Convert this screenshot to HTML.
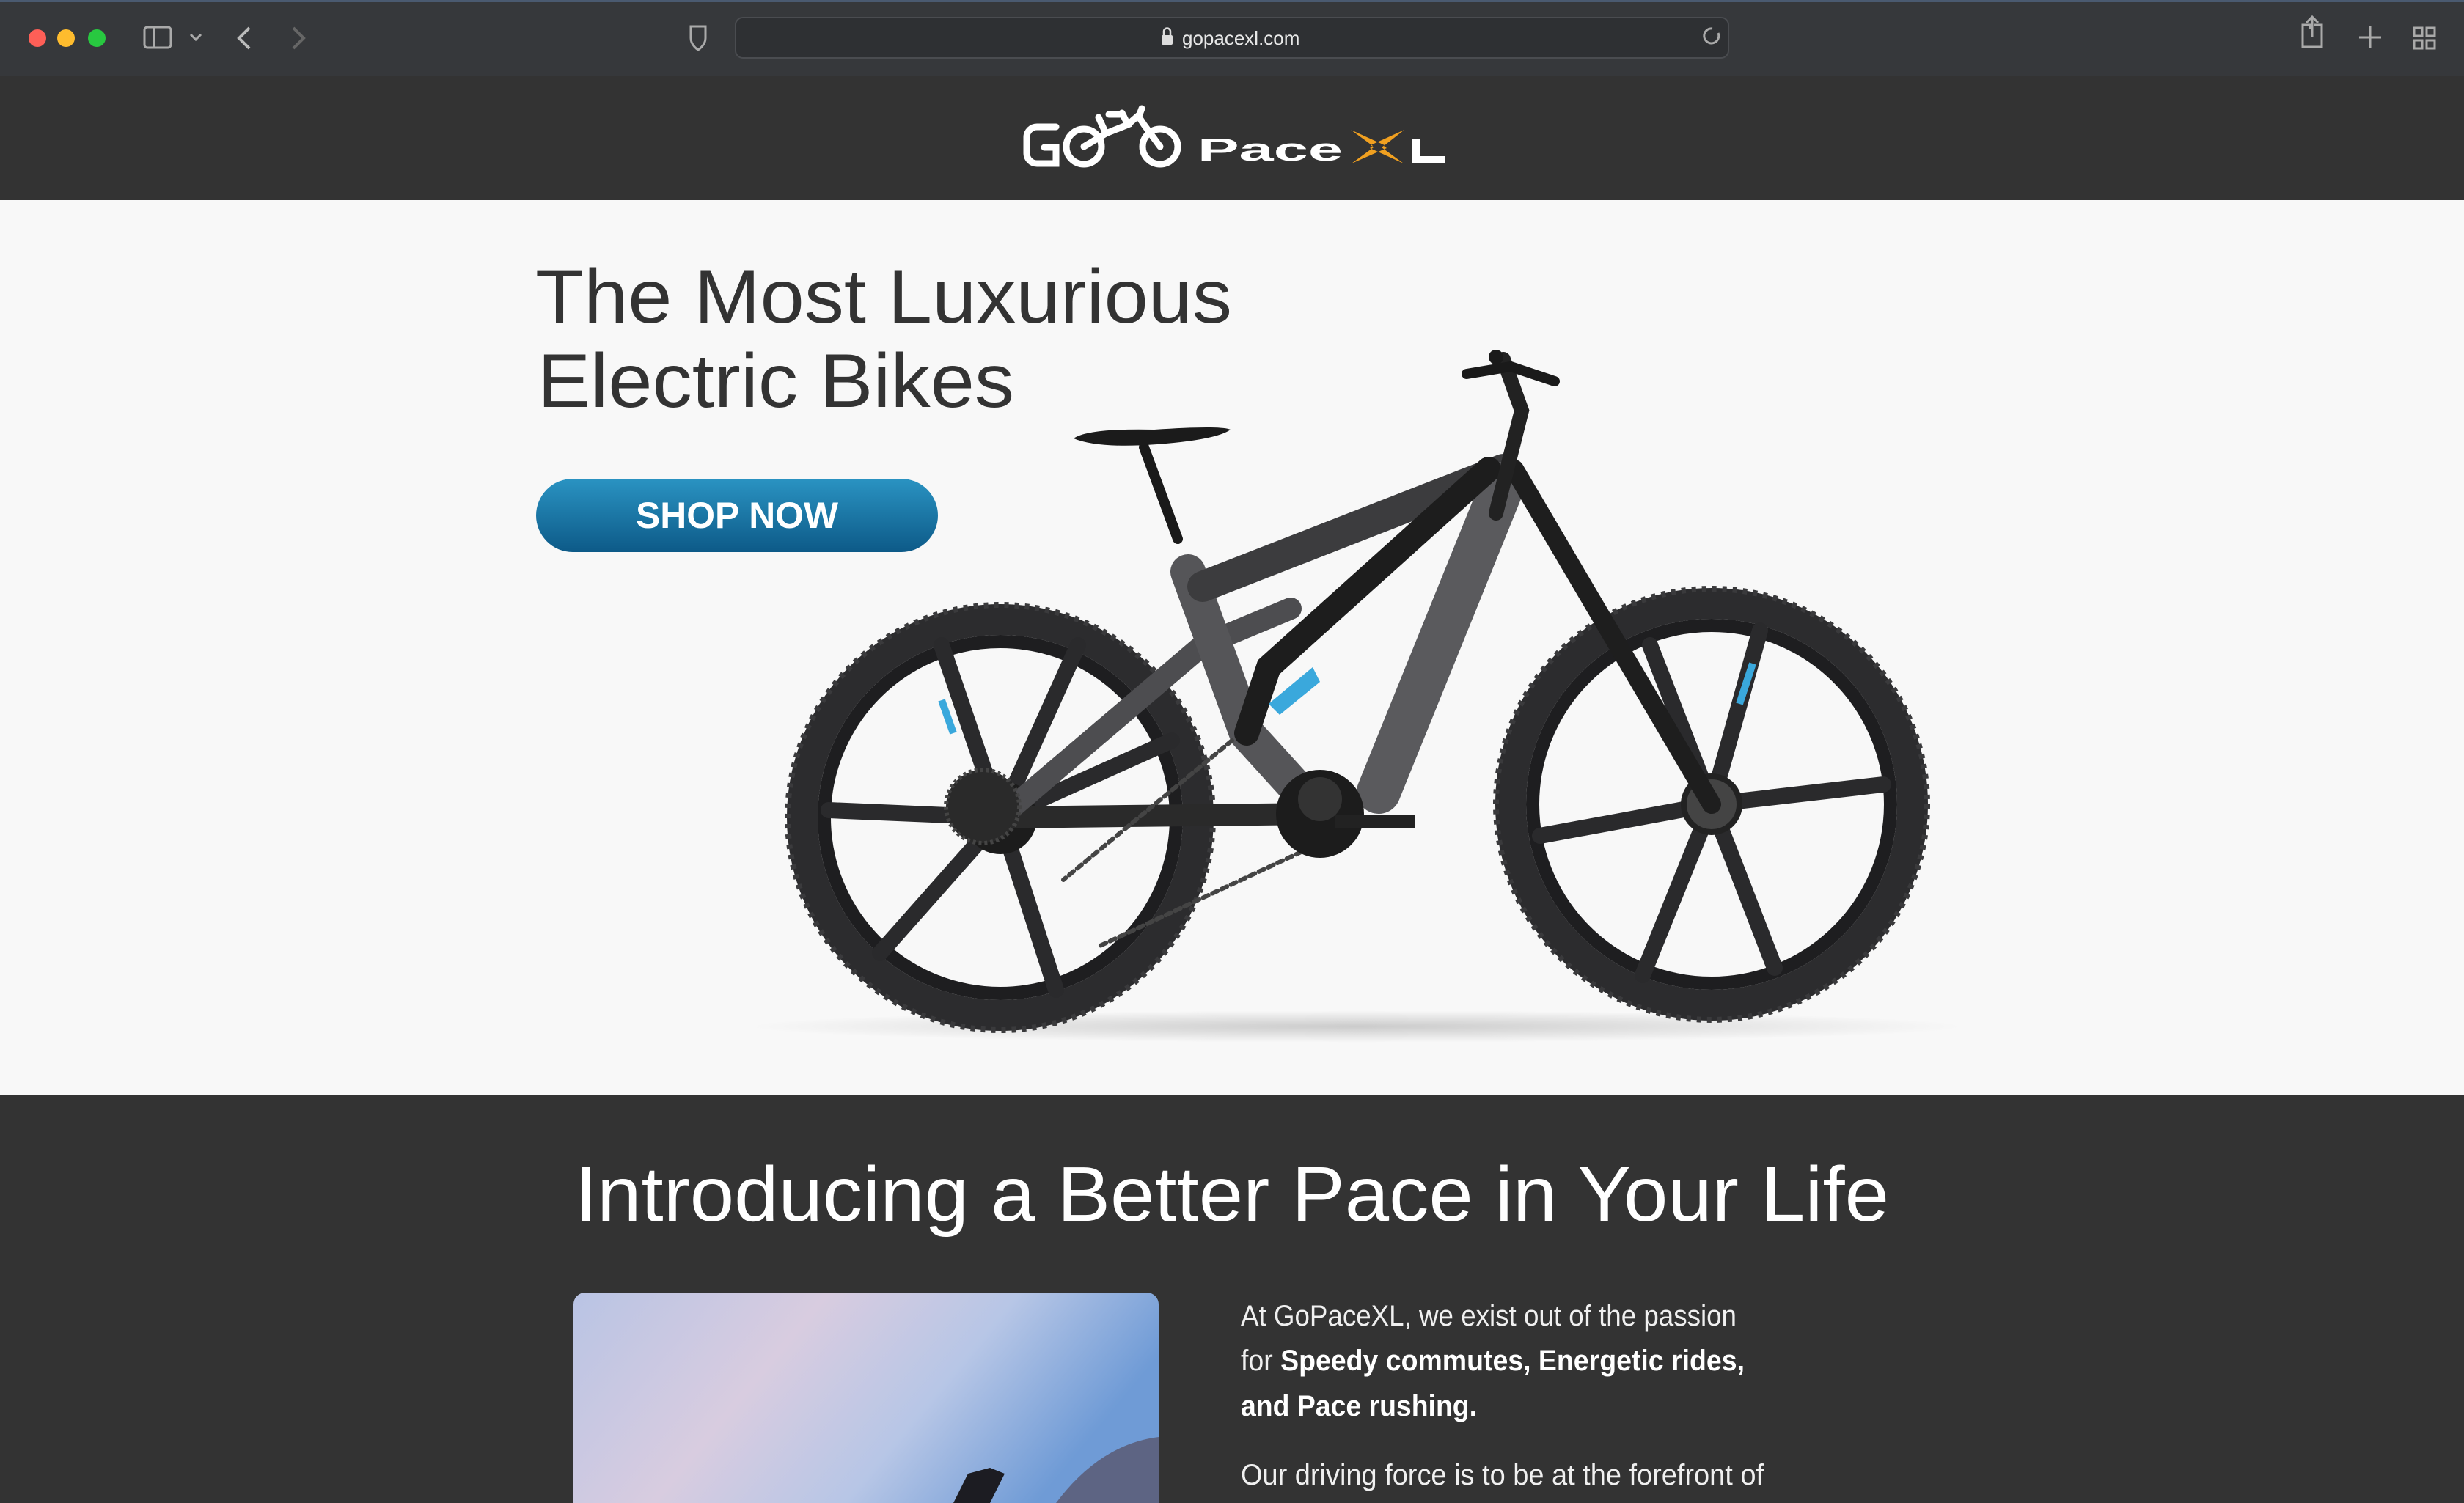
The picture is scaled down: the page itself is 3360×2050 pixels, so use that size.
<!DOCTYPE html>
<html><head><meta charset="utf-8"><style>
html,body{margin:0;padding:0;width:3360px;height:2050px;overflow:hidden;background:#333;font-family:"Liberation Sans",sans-serif}
svg{display:block}
</style></head><body>
<svg width="3360" height="2050" viewBox="0 0 3360 2050" xmlns="http://www.w3.org/2000/svg">
<defs>
<linearGradient id="btn" x1="0" y1="0" x2="0" y2="1"><stop offset="0" stop-color="#2a93c2"/><stop offset="1" stop-color="#0d5a88"/></linearGradient>
<linearGradient id="sky" x1="0" y1="0" x2="1" y2="0.3"><stop offset="0" stop-color="#b9c4e4"/><stop offset="0.4" stop-color="#d8cce0"/><stop offset="0.7" stop-color="#b7c6e6"/><stop offset="1" stop-color="#6f9bd6"/></linearGradient>
<radialGradient id="shadow" cx="0.5" cy="0.5" r="0.5"><stop offset="0" stop-color="#000" stop-opacity="0.18"/><stop offset="1" stop-color="#000" stop-opacity="0"/></radialGradient>
</defs>
<rect x="0" y="0" width="3360" height="103" fill="#36383b"/>
<rect x="0" y="0" width="3360" height="3" fill="#4a5a70"/>
<circle cx="51" cy="52" r="12" fill="#fe5f57"/><circle cx="90" cy="52" r="12" fill="#febc2e"/><circle cx="132" cy="52" r="12" fill="#28c840"/>
<rect x="197" y="37" width="36" height="28" rx="4" fill="none" stroke="#aaa" stroke-width="3"/><line x1="210" y1="37" x2="210" y2="65" stroke="#aaa" stroke-width="3"/>
<path d="M260 47 l7 7 l7-7" fill="none" stroke="#aaa" stroke-width="3"/>
<path d="M340 38 l-14 14 l14 14" fill="none" stroke="#bbb" stroke-width="4"/>
<path d="M400 38 l14 14 l-14 14" fill="none" stroke="#666" stroke-width="4"/>
<path d="M942 36 h20 v16 c0 10 -10 16 -10 16 c0 0 -10 -6 -10 -16z" fill="none" stroke="#aaa" stroke-width="3"/>
<rect x="1003" y="24" width="1354" height="55" rx="10" fill="#2e3033" stroke="#4a4c50" stroke-width="2"/>
<rect x="1584" y="48" width="15" height="13" rx="2" fill="#ddd"/><path d="M1587 48 v-5 a4.5 4.5 0 0 1 9 0 v5" fill="none" stroke="#ddd" stroke-width="2.5"/>
<text x="1612" y="61" font-size="26" fill="#e8e8e8">gopacexl.com</text>
<path d="M2343 45 a10 10 0 1 1 -8 -6" fill="none" stroke="#aaa" stroke-width="3"/>
<path d="M3150 40 v-6 h-10 v30 h26 v-30 h-10" fill="none" stroke="#aaa" stroke-width="3"/><path d="M3153 24 v26 M3145 31 l8-8 l8 8" fill="none" stroke="#aaa" stroke-width="3"/>
<path d="M3232 36 v30 M3217 51 h30" stroke="#aaa" stroke-width="3"/>
<rect x="3292" y="38" width="11" height="11" fill="none" stroke="#aaa" stroke-width="3"/><rect x="3309" y="38" width="11" height="11" fill="none" stroke="#aaa" stroke-width="3"/><rect x="3292" y="55" width="11" height="11" fill="none" stroke="#aaa" stroke-width="3"/><rect x="3309" y="55" width="11" height="11" fill="none" stroke="#aaa" stroke-width="3"/>
<rect x="0" y="103" width="3360" height="170" fill="#333"/>
<g fill="none" stroke="#fff" stroke-width="9" stroke-linecap="round">
<path d="M1440 173 h-26 a14 14 0 0 0 -14 14 v22 a14 14 0 0 0 14 14 h26 v-22 h-16"/>
<circle cx="1478" cy="200" r="24"/>
<circle cx="1582" cy="200" r="24"/>
<path d="M1478 200 l30 -18 l30 -12 l-8 -16 M1508 182 l-10 -22 M1538 170 l16 -14 l3 -8 M1552 158 l8 12 l22 30 M1512 156 h16"/>
</g>
<text x="1633" y="219" font-size="44" font-weight="bold" fill="#fff" textLength="198" lengthAdjust="spacingAndGlyphs">Pace</text>
<path d="M1842 177 l30 22 l-4 3 l46 21 l-30 -22 l4 -3z M1915 177 l-28 22 l4 3 l-48 21 l30 -22 l-4 -3z" fill="#f0a020"/>
<path d="M1931 190 v28 h40" fill="none" stroke="#fff" stroke-width="10"/>
<rect x="0" y="273" width="3360" height="1220" fill="#f8f8f8"/>
<text x="730" y="440" font-size="104" fill="#333" textLength="950" lengthAdjust="spacingAndGlyphs">The Most Luxurious</text>
<text x="733" y="555" font-size="104" fill="#333" textLength="650" lengthAdjust="spacingAndGlyphs">Electric Bikes</text>
<rect x="731" y="653" width="548" height="100" rx="50" fill="url(#btn)"/>
<text x="1005" y="720" font-size="50" font-weight="bold" fill="#fff" text-anchor="middle" textLength="276" lengthAdjust="spacingAndGlyphs">SHOP NOW</text>
<ellipse cx="1850" cy="1400" rx="830" ry="22" fill="url(#shadow)"/>
<g>
<circle cx="1364" cy="1115" r="270" fill="none" stroke="#2c2c2e" stroke-width="42"/>
<circle cx="1364" cy="1115" r="290" fill="none" stroke="#3a3a3c" stroke-width="8" stroke-dasharray="6 8"/>
<circle cx="1364" cy="1115" r="240" fill="none" stroke="#1e1e20" stroke-width="18"/>
<circle cx="2334" cy="1097" r="274" fill="none" stroke="#2c2c2e" stroke-width="42"/>
<circle cx="2334" cy="1097" r="294" fill="none" stroke="#3a3a3c" stroke-width="8" stroke-dasharray="6 8"/>
<circle cx="2334" cy="1097" r="244" fill="none" stroke="#1e1e20" stroke-width="18"/>
<g stroke="#2a2a2c" stroke-width="22" stroke-linecap="round">
<path d="M1364 1115 L1284 880 M1364 1115 L1598 1010 M1364 1115 L1440 1350 M1364 1115 L1200 1300 M1364 1115 L1130 1105 M1364 1115 L1470 880"/>
<path d="M2334 1097 L2400 860 M2334 1097 L2568 1070 M2334 1097 L2420 1320 M2334 1097 L2240 1330 M2334 1097 L2100 1140 M2334 1097 L2250 880"/>
</g>
<path d="M1284 955 L1300 1000" stroke="#3aa8dc" stroke-width="10"/>
<path d="M2390 905 L2372 960" stroke="#3aa8dc" stroke-width="10"/>
<circle cx="1364" cy="1115" r="50" fill="#1c1c1c"/>
<circle cx="2334" cy="1097" r="38" fill="#444" stroke="#222" stroke-width="8"/>
<g stroke-linecap="round" fill="none">
<path d="M1364 1115 L1800 1110" stroke="#2a2a2a" stroke-width="30"/>
<path d="M1364 1115 L1640 880 L1760 830" stroke="#4d4d50" stroke-width="30"/>
<path d="M1620 780 L1700 1000 L1800 1110" stroke="#555558" stroke-width="48"/>
<path d="M1640 800 L2050 640" stroke="#3c3c3e" stroke-width="42"/>
<path d="M2050 660 L1880 1080" stroke="#5a5a5d" stroke-width="60"/>
<path d="M2030 640 L1730 910 L1700 1000" stroke="#1d1d1d" stroke-width="34"/>
<path d="M2065 640 L2334 1097" stroke="#1e1e1e" stroke-width="26"/>
<path d="M2040 700 L2075 560 L2050 490" stroke="#222" stroke-width="20"/>
<path d="M1606 735 L1560 610" stroke="#1a1a1a" stroke-width="14"/>
<path d="M1680 1010 L1450 1200" stroke="#444" stroke-width="6" stroke-dasharray="8 6"/>
<path d="M1800 1150 L1500 1290" stroke="#444" stroke-width="6" stroke-dasharray="8 6"/>
</g>
<path d="M1464 598 q20 -14 110 -12 q90 -6 104 0 q-20 14 -100 20 q-80 6 -114 -8z" fill="#1b1b1b"/>
<path d="M1730 960 l60 -50 l10 20 l-55 45z" fill="#3aa8dc"/>
<circle cx="1800" cy="1110" r="60" fill="#1c1c1c"/>
<circle cx="1800" cy="1090" r="30" fill="#333"/>
<path d="M1820 1120 L1930 1120" stroke="#222" stroke-width="18"/>
<circle cx="1340" cy="1100" r="50" fill="#2a2a2a" stroke="#444" stroke-width="6" stroke-dasharray="4 4"/>
<path d="M2000 510 l60 -10 l60 20" stroke="#1a1a1a" stroke-width="14" fill="none" stroke-linecap="round"/>
<circle cx="2040" cy="487" r="10" fill="#1a1a1a"/>
</g>
<rect x="0" y="1493" width="3360" height="557" fill="#333"/>
<text x="1680" y="1665" font-size="106" fill="#fff" text-anchor="middle" textLength="1792" lengthAdjust="spacingAndGlyphs">Introducing a Better Pace in Your Life</text>
<path d="M782 1779 a16 16 0 0 1 16 -16 h766 a16 16 0 0 1 16 16 v271 h-798z" fill="url(#sky)"/>
<path d="M1440 2050 q60 -80 140 -90 v90z" fill="#5d6483"/>
<path d="M1300 2050 l20 -40 l30 -8 l20 8 l-20 40z" fill="#1c1c22"/>
<g font-size="40" fill="#f0f0f0">
<text x="1692" y="1808" font-weight="300" textLength="676" lengthAdjust="spacingAndGlyphs">At GoPaceXL, we exist out of the passion</text>
<text x="1692" y="1869" textLength="687" lengthAdjust="spacingAndGlyphs"><tspan font-weight="300">for </tspan><tspan font-weight="bold" fill="#fff">Speedy commutes, Energetic rides,</tspan></text>
<text x="1692" y="1931" font-weight="bold" fill="#fff" textLength="322" lengthAdjust="spacingAndGlyphs">and Pace rushing.</text>
<text x="1692" y="2025" textLength="713" lengthAdjust="spacingAndGlyphs">Our driving force is to be at the forefront of</text>
</g>
</svg>
</body></html>
